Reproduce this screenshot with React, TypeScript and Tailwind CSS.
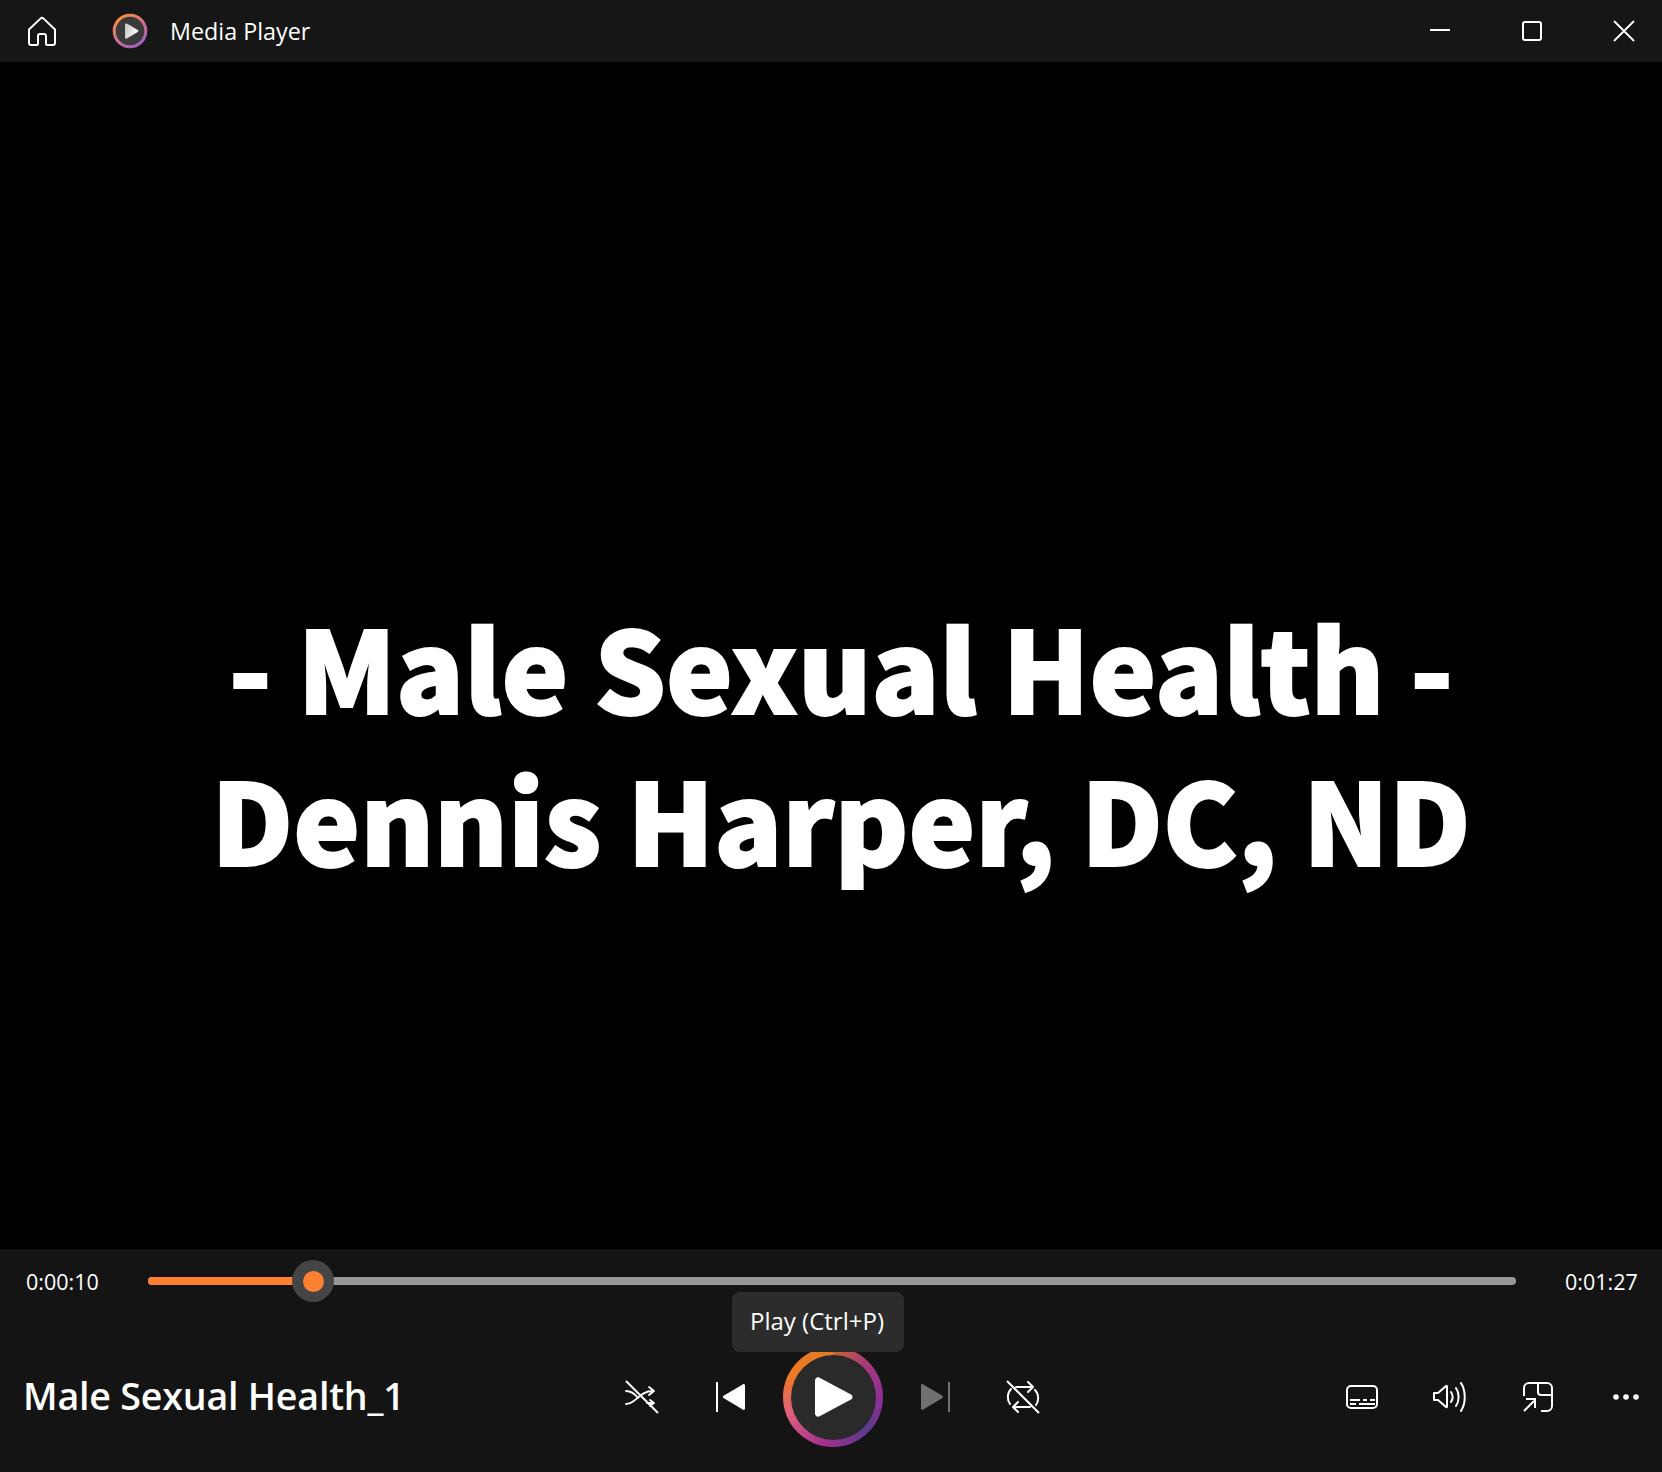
const uiFont = "font-['Open_Sans','Noto_Sans',sans-serif]";

function HomeIcon() {
  return (
    <svg width="30" height="31" viewBox="0 0 30 31" fill="none" stroke="#fff" strokeWidth="2" strokeLinejoin="round">
      <path d="M2 13.5 13.4 2.6a2.3 2.3 0 0 1 3.2 0L28 13.5V27a2 2 0 0 1-2 2h-6a1 1 0 0 1-1-1v-8a2 2 0 0 0-2-2h-4a2 2 0 0 0-2 2v8a1 1 0 0 1-1 1H4a2 2 0 0 1-2-2Z" />
    </svg>
  );
}

function AppLogo() {
  return (
    <svg width="36" height="36" viewBox="0 0 36 36">
      <defs>
        <linearGradient id="logoRing" x1="0.2" y1="0" x2="0.8" y2="1">
          <stop offset="0" stopColor="#f8913a" />
          <stop offset="0.5" stopColor="#d0708a" />
          <stop offset="1" stopColor="#9a62c8" />
        </linearGradient>
        <linearGradient id="logoPlay" x1="0" y1="0" x2="1" y2="0.3">
          <stop offset="0" stopColor="#c4c4c4" />
          <stop offset="1" stopColor="#fafafa" />
        </linearGradient>
      </defs>
      <circle cx="18" cy="18" r="15.8" fill="#3a3a3a" stroke="url(#logoRing)" strokeWidth="3" />
      <path d="M13 11.6c0-1 1-1.500 1.800-1l11 6.500c.8.500.8 1.600 0 2l-11 6.500c-.8.500-1.800-.1-1.800-1Z" fill="url(#logoPlay)" />
    </svg>
  );
}

function WindowButtons() {
  return (
    <div className="flex items-center">
      <svg width="22" height="22" viewBox="0 0 22 22" className="mr-[71px]">
        <path d="M1 10h20" stroke="#fff" strokeWidth="2" />
      </svg>
      <div className="mr-[71px] h-[20px] w-[20px] rounded-[3px] border-2 border-white" />
      <svg width="22" height="22" viewBox="0 0 22 22" className="mr-[27px]">
        <path d="M1 1l20 20M21 1 1 21" stroke="#fff" strokeWidth="1.800" />
      </svg>
    </div>
  );
}

function ShuffleIcon() {
  return (
    <svg width="34" height="34" viewBox="0 0 34 34" fill="none" stroke="#fff" strokeWidth="1.800" strokeLinecap="round" strokeLinejoin="round">
      <path d="M1 24c10 0 13-13 27-13M24 7l5 4-5 4" />
      <path d="M1 11c5 0 9 3 12 7M22 23h7M25 20l4 3-4 3" />
      <path d="M1 1l32 32" strokeWidth="2" strokeLinecap="butt" />
    </svg>
  );
}

function PrevIcon() {
  return (
    <svg width="30" height="30" viewBox="0 0 30 30" fill="#fff">
      <rect x="0" y="0" width="2" height="30" />
      <path d="M29 3.500v23c0 1.200-1.300 1.800-2.300 1.100L7.500 16c-.8-.6-.8-1.600 0-2.200L26.700 2.400c1-.7 2.300-.1 2.300 1.100Z" />
    </svg>
  );
}

function NextIcon() {
  return (
    <svg width="30" height="30" viewBox="0 0 30 30" fill="#707070">
      <rect x="28" y="0" width="2" height="30" />
      <path d="M1 3.500v23c0 1.200 1.300 1.800 2.300 1.100L22.500 16c.8-.6.8-1.600 0-2.200L3.300 2.400C2.300 1.700 1 2.300 1 3.500Z" />
    </svg>
  );
}

function RepeatIcon() {
  return (
    <svg width="34" height="34" viewBox="0 0 34 34" fill="none" stroke="#fff" strokeWidth="2" strokeLinecap="round" strokeLinejoin="round">
      <path d="M10 7h17M22 2l5 5-5 5" />
      <path d="M24 27H7M12 22l-5 5 5 5" />
      <path d="M5 9c-4 4-4 11-1 15M29 10c4 4 4 11 1 15" />
      <path d="M1 1l32 32" strokeLinecap="butt" />
    </svg>
  );
}

function CaptionsIcon() {
  return (
    <svg width="32" height="24" viewBox="0 0 32 24" fill="none" stroke="#fff" strokeWidth="2">
      <rect x="1" y="1" width="30" height="22" rx="4" />
      <path d="M4 15h10M17 15h4M24 15h5M4 19h6M13 19h16" />
    </svg>
  );
}

function VolumeIcon() {
  return (
    <svg width="34" height="30" viewBox="0 0 34 30" fill="none" stroke="#fff" strokeWidth="2" strokeLinecap="round" strokeLinejoin="round">
      <path d="M1 11h4l8-7c.5-.4 1-.1 1 .5v20c0 .6-.5.900-1 .5l-8-7H1Z" />
      <path d="M18 10c2 3 2 7 0 10M23 6c3.500 5 3.500 13 0 18M28 1c5 8 5 20 0 28" />
    </svg>
  );
}

function MiniPlayerIcon() {
  return (
    <svg width="30" height="30" viewBox="0 0 30 30" fill="none" stroke="#fff" strokeWidth="2">
      <path d="M1 14V6a5 5 0 0 1 5-5h18a5 5 0 0 1 5 5v18a5 5 0 0 1-5 5h-6" />
      <path d="M15 1v9a3 3 0 0 0 3 3h11" />
      <path d="M1 29 11 19M3 17h9v9" />
    </svg>
  );
}

function MoreIcon() {
  return (
    <svg width="26" height="6" viewBox="0 0 26 6" fill="#fff">
      <circle cx="3" cy="3" r="2.800" />
      <circle cx="13" cy="3" r="2.800" />
      <circle cx="23" cy="3" r="2.800" />
    </svg>
  );
}

function ControlSlot({ children }: { children: React.ReactNode }) {
  return <div className="flex h-[48px] w-[48px] items-center justify-center">{children}</div>;
}

function PlayButton() {
  return (
    <div className="flex h-[100px] w-[100px] items-center justify-center rounded-full bg-[conic-gradient(#c8642f_0deg,#a53a78_45deg,#8f2f95_90deg,#5b3a8c_135deg,#a02f90_190deg,#e0607a_250deg,#f07a20_300deg,#e07a28_360deg)]">
      <div className="flex h-[85px] w-[85px] items-center justify-center rounded-full bg-[#2a2a2a]">
        <svg width="38" height="40" viewBox="0 0 38 40" fill="#fff" className="ml-[2px]">
          <path d="M0 3.500v33c0 2.500 2.500 4 4.600 2.700L36 22.500c2-1.100 2-3.900 0-5L4.600.8C2.500-.5 0 1 0 3.500Z" />
        </svg>
      </div>
    </div>
  );
}

export default function App() {
  return (
    <div className={`flex h-[1472px] w-[1662px] flex-col overflow-hidden bg-black text-white ${uiFont}`}>
      <header className="flex h-[62px] shrink-0 items-center justify-between bg-[#161616]">
        <div className="flex items-center">
          <div className="ml-[27px]"><HomeIcon /></div>
          <div className="ml-[55px]"><AppLogo /></div>
          <span className="ml-[22px] pt-[2px] text-[23.300px] leading-none">Media Player</span>
        </div>
        <WindowButtons />
      </header>

      <main className="flex flex-1 flex-col items-center justify-center pt-[171px] pl-[20px] font-['Noto_Sans_CJK_SC','Noto_Sans',sans-serif] text-[112.400px] leading-[152px] font-black whitespace-nowrap [-webkit-text-stroke:2px_white]">
        <div>- Male Sexual Health -</div>
        <div>Dennis Harper, DC, ND</div>
      </main>

      <footer className="relative flex h-[223px] shrink-0 flex-col bg-[#141414]">
        <div className="flex h-[64px] items-center pl-[26px]">
          <span className="w-[122px] pt-[1px] text-[21.500px] leading-none">0:00:10</span>
          <div className="relative flex h-[8px] w-[1368px] rounded-full bg-[#979797]">
            <div className="h-full w-[165px] rounded-full bg-[#ff8033]" />
            <div className="absolute top-1/2 left-[144px] flex h-[42px] w-[42px] -translate-y-1/2 items-center justify-center rounded-full bg-[#454545]">
              <div className="h-[21px] w-[21px] rounded-full bg-[#ff8033]" />
            </div>
          </div>
          <span className="ml-[49px] pt-[1px] text-[21.500px] leading-none">0:01:27</span>
        </div>

        <div className="flex flex-1 items-center pt-[9px]">
          <div className="w-[618px] shrink-0 pb-[3px] pl-[23px] text-[37.600px] leading-none font-semibold tracking-[-0.2px]">Male Sexual Health_1</div>
          <div className="flex items-center">
            <ControlSlot><ShuffleIcon /></ControlSlot>
            <div className="ml-[41px]"><ControlSlot><PrevIcon /></ControlSlot></div>
            <div className="ml-[28px]"><PlayButton /></div>
            <div className="ml-[28px]"><ControlSlot><NextIcon /></ControlSlot></div>
            <div className="ml-[40px]"><ControlSlot><RepeatIcon /></ControlSlot></div>
          </div>
          <div className="ml-[291px]"><ControlSlot><CaptionsIcon /></ControlSlot></div>
          <div className="ml-[40px]"><ControlSlot><VolumeIcon /></ControlSlot></div>
          <div className="ml-[40px]"><ControlSlot><MiniPlayerIcon /></ControlSlot></div>
          <div className="ml-[40px]"><ControlSlot><MoreIcon /></ControlSlot></div>
        </div>

        <div className="absolute top-[43px] left-[732px] flex h-[60px] w-[172px] items-center justify-center rounded-[8px] bg-[#2c2c2c] pr-[2px] pb-[2px] text-[24px] leading-none">
          Play (Ctrl+P)
        </div>
      </footer>
    </div>
  );
}
